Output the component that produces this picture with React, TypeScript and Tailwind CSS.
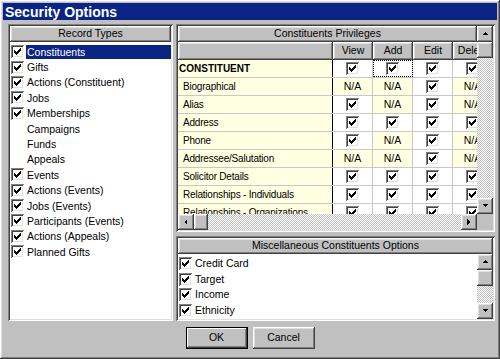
import React from "react";

const raised =
  "shadow-[inset_-1px_-1px_#404040,inset_1px_1px_#ffffff,inset_-2px_-2px_#808080,inset_2px_2px_#dfdfdf]";
const sunken =
  "shadow-[inset_1px_1px_#808080,inset_-1px_-1px_#ffffff,inset_2px_2px_#404040,inset_-2px_-2px_#dfdfdf]";
const track =
  "bg-[repeating-conic-gradient(#c0c0c0_0%_25%,#ffffff_0%_50%)] bg-[length:2px_2px]";

const CHECK_ROWS: [number, number, number][] = [
  [6, 0, 1],
  [5, 1, 2],
  [0, 2, 1],
  [4, 2, 3],
  [0, 3, 2],
  [3, 3, 3],
  [0, 4, 5],
  [1, 5, 3],
  [2, 6, 1],
];

function Check({ checked = true }: { checked?: boolean }) {
  return (
    <span className={`relative inline-block w-[13px] h-[13px] shrink-0 bg-white ${sunken}`}>
      {checked && (
        <svg className="absolute left-[3px] top-[3px]" width="7" height="7" viewBox="0 0 7 7" shapeRendering="crispEdges">
          {CHECK_ROWS.map(([x, y, w], i) => (
            <rect key={i} x={x} y={y} width={w} height={1} fill="#000" />
          ))}
        </svg>
      )}
    </span>
  );
}

function Arrow({ dir }: { dir: "up" | "down" | "left" | "right" }) {
  const pts = {
    up: "1,5 4,2 7,5",
    down: "1,2 4,5 7,2",
    left: "5,1 2,4 5,7",
    right: "2,1 5,4 2,7",
  }[dir];
  return (
    <div className={`w-[16px] h-[16px] shrink-0 bg-[#c0c0c0] flex items-center justify-center ${raised}`}>
      <svg width="8" height="8" viewBox="0 0 8 8" shapeRendering="crispEdges">
        <polygon points={pts} fill="#000" />
      </svg>
    </div>
  );
}

function Thumb({ vertical }: { vertical?: boolean }) {
  return <div className={`${vertical ? "w-[16px] h-[16px]" : "w-[14px] h-[16px]"} shrink-0 bg-[#c0c0c0] ${raised}`} />;
}

function PanelHeader({ label }: { label: string }) {
  return (
    <div className={`h-[16px] shrink-0 bg-[#c0c0c0] flex items-center justify-center text-[10.5px] text-black ${raised}`}>
      {label}
    </div>
  );
}

const recordTypes: { label: string; checked: boolean }[] = [
  { label: "Constituents", checked: true },
  { label: "Gifts", checked: true },
  { label: "Actions (Constituent)", checked: true },
  { label: "Jobs", checked: true },
  { label: "Memberships", checked: true },
  { label: "Campaigns", checked: false },
  { label: "Funds", checked: false },
  { label: "Appeals", checked: false },
  { label: "Events", checked: true },
  { label: "Actions (Events)", checked: true },
  { label: "Jobs (Events)", checked: true },
  { label: "Participants (Events)", checked: true },
  { label: "Actions (Appeals)", checked: true },
  { label: "Planned Gifts", checked: true },
];

// c = checkbox, n = N/A
const privileges: { label: string; bold?: boolean; cells: string }[] = [
  { label: "CONSTITUENT", bold: true, cells: "cccc" },
  { label: "Biographical", cells: "nncn" },
  { label: "Alias", cells: "cncn" },
  { label: "Address", cells: "cccc" },
  { label: "Phone", cells: "cncn" },
  { label: "Addressee/Salutation", cells: "nncn" },
  { label: "Solicitor Details", cells: "cccc" },
  { label: "Relationships - Individuals", cells: "cccc" },
  { label: "Relationships - Organizations", cells: "cccc" },
];

const columns = ["View", "Add", "Edit", "Delete"];

const miscOptions = ["Credit Card", "Target", "Income", "Ethnicity", "Religion"];

export default function App() {
  return (
    <div
      className={`w-[500px] h-[359px] bg-[#c0c0c0] p-[3px] flex flex-col overflow-hidden ${raised}`}
      style={{ fontFamily: '"Liberation Sans", Arial, sans-serif' }}
    >
      {/* Title bar */}
      <div className="h-[17px] shrink-0 bg-[#0a2486] flex items-center px-[2px]">
        <span className="text-white font-bold text-[14px] leading-none">Security Options</span>
      </div>

      <div className="flex-1 flex gap-[3px] pl-[5px] pr-[2px] pt-[4px]">
        {/* Record types */}
        <div className={`w-[165px] shrink-0 h-[297px] p-[2px] bg-white flex flex-col ${sunken}`}>
          <PanelHeader label="Record Types" />
          <div className="flex flex-col pt-[2px]">
            {recordTypes.map((r, i) => (
              <div key={r.label} className="h-[15.4px] flex items-center pl-[1px] text-[10.5px] text-black">
                {r.checked ? <Check /> : <span className="w-[13px] shrink-0" />}
                <span
                  className={`ml-[2px] px-[1px] leading-[14px] ${
                    i === 0 ? "flex-1 bg-[#0a2486] text-white outline-1 outline-dotted outline-[#ffff80]" : ""
                  }`}
                >
                  {r.label}
                </span>
              </div>
            ))}
          </div>
        </div>

        <div className="flex-1 min-w-0 flex flex-col gap-[4px]">
          {/* Privileges */}
          <div className={`h-[208px] p-[2px] bg-[#c0c0c0] flex flex-col ${sunken}`}>
            <div className="flex-1 flex min-h-0">
              <div className="flex-1 flex flex-col min-w-0 overflow-hidden">
                <PanelHeader label="Constituents Privileges" />
                <div className="flex h-[18px] shrink-0">
                  <div className={`w-[155px] shrink-0 bg-[#c0c0c0] ${raised}`} />
                  {columns.map((c) => (
                    <div
                      key={c}
                      className={`w-[40px] shrink-0 bg-[#c0c0c0] flex items-center justify-center text-[10.5px] text-black ${raised}`}
                    >
                      {c}
                    </div>
                  ))}
                </div>
                <div className="flex-1 flex flex-col overflow-hidden bg-white">
                  {privileges.map((row, ri) => (
                    <div key={row.label} className="flex h-[18px] shrink-0 border-b border-[#c8c8c8]">
                      <div
                        className={`w-[155px] shrink-0 bg-[#ffffe1] border-r border-black flex items-center text-black whitespace-nowrap overflow-hidden ${
                          row.bold ? "font-bold pl-[1px] text-[10px]" : "pl-[5px] text-[10px] tracking-[-0.2px]"
                        }`}
                      >
                        {row.label}
                      </div>
                      {row.cells.split("").map((cell, ci) => (
                        <div
                          key={ci}
                          className={`w-[40px] shrink-0 border-r border-[#c8c8c8] flex items-center justify-center text-[10.5px] text-black ${
                            cell === "n" ? "bg-[#ffffe1]" : "bg-white"
                          } ${ri === 0 && ci === 1 ? "outline-1 outline-dotted outline-black -outline-offset-1" : ""}`}
                        >
                          {cell === "c" ? <Check /> : "N/A"}
                        </div>
                      ))}
                    </div>
                  ))}
                </div>
              </div>
              {/* vertical scroll */}
              <div className={`w-[16px] shrink-0 flex flex-col ${track}`}>
                <Arrow dir="up" />
                <Thumb vertical />
                <div className="flex-1" />
                <Arrow dir="down" />
              </div>
            </div>
            {/* horizontal scroll */}
            <div className="h-[16px] shrink-0 flex">
              <div className={`flex-1 flex ${track}`}>
                <Arrow dir="left" />
                <Thumb />
                <div className="flex-1" />
                <Arrow dir="right" />
              </div>
              <div className="w-[16px] shrink-0 bg-[#c0c0c0]" />
            </div>
          </div>

          {/* Misc options */}
          <div className={`h-[85px] p-[2px] bg-white flex flex-col ${sunken}`}>
            <PanelHeader label="Miscellaneous Constituents Options" />
            <div className="flex-1 flex min-h-0">
              <div className="flex-1 flex flex-col overflow-hidden pt-[2px]">
                {miscOptions.map((o) => (
                  <div key={o} className="h-[15.6px] shrink-0 flex items-center pl-[1px] text-[10.5px] text-black">
                    <Check />
                    <span className="ml-[3px]">{o}</span>
                  </div>
                ))}
              </div>
              <div className={`w-[16px] shrink-0 flex flex-col ${track}`}>
                <Arrow dir="up" />
                <Thumb vertical />
                <div className="flex-1" />
                <Arrow dir="down" />
              </div>
            </div>
          </div>
        </div>
      </div>

      {/* Buttons */}
      <div className="h-[36px] shrink-0 flex items-start justify-center gap-[5px] pt-[6px]">
        <button
          className="w-[62px] h-[22px] bg-[#c0c0c0] text-[10.5px] text-black border border-black shadow-[inset_-1px_-1px_#404040,inset_1px_1px_#ffffff,inset_-2px_-2px_#808080]"
        >
          OK
        </button>
        <button className={`w-[62px] h-[22px] bg-[#c0c0c0] text-[10.5px] text-black ${raised}`}>Cancel</button>
      </div>
    </div>
  );
}
